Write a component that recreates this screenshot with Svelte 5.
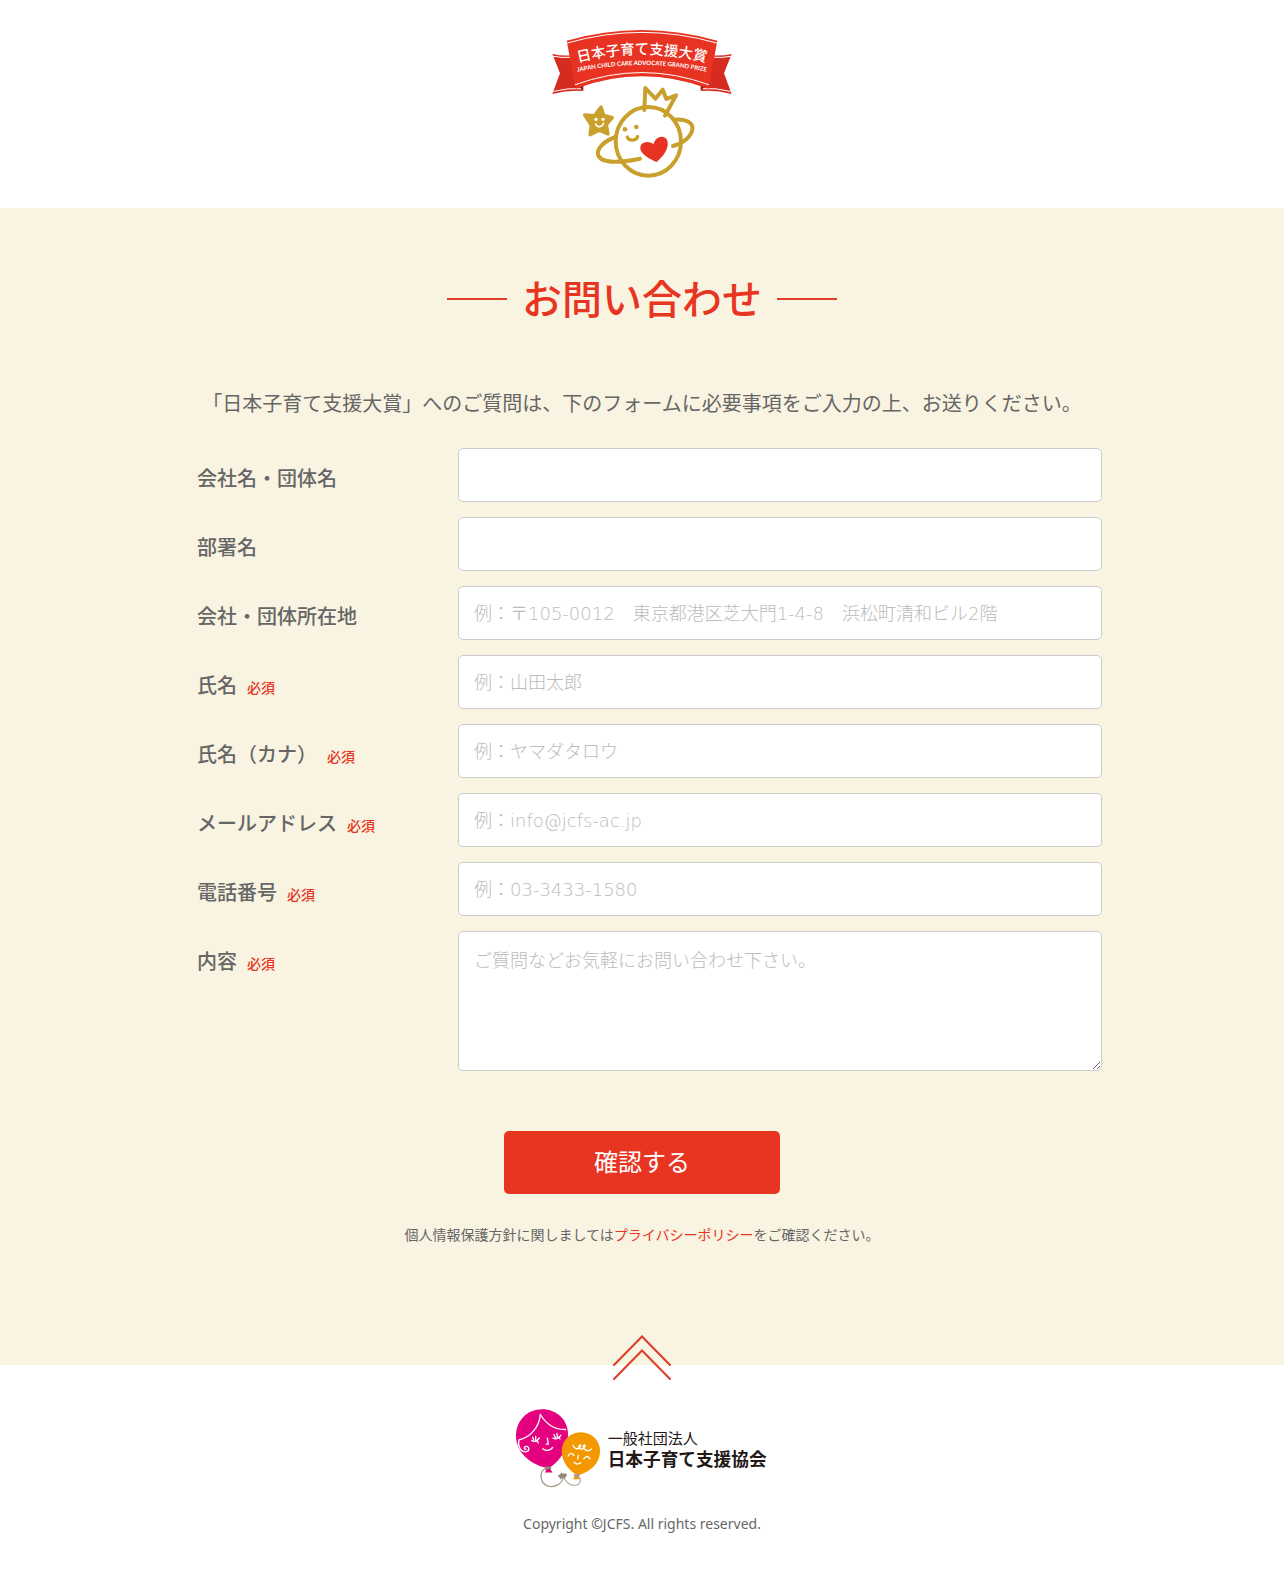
<script lang="ts">
  type Field = {
    id: string;
    label: string;
    type?: string;
    placeholder?: string;
    required?: boolean;
  };

  const fields: Field[] = [
    { id: 'company', label: '会社名・団体名' },
    { id: 'department', label: '部署名' },
    { id: 'address', label: '会社・団体所在地', placeholder: '例：〒105-0012　東京都港区芝大門1-4-8　浜松町清和ビル2階' },
    { id: 'name', label: '氏名', placeholder: '例：山田太郎', required: true },
    { id: 'kana', label: '氏名（カナ）', placeholder: '例：ヤマダタロウ', required: true },
    { id: 'email', label: 'メールアドレス', type: 'email', placeholder: '例：info@jcfs-ac.jp', required: true },
    { id: 'tel', label: '電話番号', type: 'tel', placeholder: '例：03-3433-1580', required: true }
  ];

  let values = $state<Record<string, string>>({});
  let message = $state('');

  function handleSubmit(e: SubmitEvent) {
    e.preventDefault();
  }
</script>

<div class="page" lang="ja">
  <header class="header">
    <a href="#top" class="header-logo" aria-label="日本子育て支援大賞">
      <svg viewBox="36 30 540 444" fill="none" stroke-linecap="round" stroke-linejoin="round">
        <!-- ribbon tails -->
        <path fill="#d62b1f" d="M37 102Q64 108 92 106L128 190V213Q84 210 37 222L60 160Z" />
        <path fill="#d62b1f" d="M575 102Q548 108 520 106L484 190V213Q528 210 575 222L552 160Z" />
        <path stroke="#fff" stroke-width="3" d="M40 109Q66 114 92 112M41 214Q84 203 126 206M572 109Q546 114 520 112M571 214Q528 203 486 206" />
        <path fill="#8c1710" d="M106 186L130 187V213Z" />
        <path fill="#8c1710" d="M506 186L482 187V213Z" />
        <!-- ribbon body -->
        <path fill="#e83323" d="M80 62Q306 -2 532 62L505 206Q306 132 107 206Z" />
        <path stroke="#fff" stroke-width="3" d="M82 69Q306 5 530 69M106 194Q306 121 506 194" />
        <path id="ribbon-ja" d="M102 130Q306 76 510 130" />
        <path id="ribbon-en" d="M100 158Q306 112 512 158" />
        <text class="ribbon-ja"><textPath href="#ribbon-ja" startOffset="50%">日本子育て支援大賞</textPath></text>
        <text class="ribbon-en"><textPath href="#ribbon-en" startOffset="50%">JAPAN CHILD CARE ADVOCATE GRAND PRIZE</textPath></text>
        <!-- planet with crown, star and heart -->
        <g stroke="#c9a02c" stroke-width="12">
          <ellipse cx="325" cy="364" rx="98" ry="103" />
          <path d="M313 270L316 204L346 236L368 209L379 237L408 226L375 287" />
          <path d="M402 299C436 296 461 306 457 329C453 350 430 370 399 378" />
          <path d="M226 351C196 362 169 384 174 404C182 432 242 428 300 416" />
          <path d="M262 351C266 364 290 363 293 349" stroke-width="10" />
        </g>
        <g fill="#c9a02c">
          <circle cx="255" cy="328" r="7" />
          <circle cx="289" cy="321" r="7" />
        </g>
        <path fill="#c9a02c" stroke="#c9a02c" stroke-width="10" d="M183 261L191 286L217 293L199 314L204 342L178 331L150 344L154 316L134 285L163 287Z" />
        <g fill="#fff">
          <circle cx="168" cy="298" r="5" />
          <circle cx="189" cy="298" r="5" />
        </g>
        <path stroke="#fff" stroke-width="5" d="M167 312C172 324 187 322 190 310" />
        <path fill="#e83323" d="M350 426C330 417 304 404 301 386C299 369 322 359 341 373C344 350 371 342 381 359C391 383 369 409 350 426Z" />
      </svg>
    </a>
  </header>

  <main class="main">
    <div class="container">
      <h1 class="title">お問い合わせ</h1>
      <p class="lead">「日本子育て支援大賞」へのご質問は、下のフォームに必要事項をご入力の上、お送りください。</p>

      <form onsubmit={handleSubmit}>
        {#each fields as field}
          <div class="row">
            <label for={field.id}>
              {field.label}{#if field.required}<span class="required">必須</span>{/if}
            </label>
            <input
              id={field.id}
              type={field.type ?? 'text'}
              placeholder={field.placeholder}
              required={field.required}
              bind:value={values[field.id]}
            />
          </div>
        {/each}
        <div class="row">
          <label for="message">内容<span class="required">必須</span></label>
          <textarea id="message" placeholder="ご質問などお気軽にお問い合わせ下さい。" required bind:value={message}></textarea>
        </div>

        <button type="submit" class="submit">確認する</button>
      </form>

      <p class="policy">個人情報保護方針に関しましては<a href="#privacy">プライバシーポリシー</a>をご確認ください。</p>
    </div>
  </main>

  <footer class="footer">
    <a href="#top" class="page-top" aria-label="ページの先頭へ">
      <svg viewBox="0 0 58 45" fill="none" stroke="#dc3c28" stroke-width="2" stroke-linecap="round">
        <path d="M1 30L29 1.500L57 30M1 44L29 15.500L57 44" />
      </svg>
    </a>
    <a href="#jcfs" class="footer-logo" aria-label="一般社団法人 日本子育て支援協会">
      <svg viewBox="48 266 756 236" fill="none" stroke-linecap="round" stroke-linejoin="round">
        <!-- strings -->
        <path stroke="#a89a8c" stroke-width="4" d="M136 444C118 454 118 486 142 496C166 504 188 488 190 468" />
        <path stroke="#c0b8ae" stroke-width="4" d="M190 468C196 486 214 498 230 494C244 488 244 474 236 470" />
        <path fill="#94867a" d="M173 464L180 462L184 456L190 460L198 458L201 465L194 474L186 472L182 477L178 471Z" />
        <!-- pink balloon -->
        <path fill="#e4007f" d="M126 266C171 266 204 298 204 342C204 390 174 428 145 443C105 438 48 404 48 345C48 300 82 266 126 266Z" />
        <path fill="#94867a" d="M134 438H154L152 449H137Z" />
        <path fill="#e4007f" d="M139 446H151L158 456H135Z" />
        <g stroke="#fff" stroke-width="4">
          <path d="M121 282C118 320 90 352 57 358C52 376 62 394 77 394C90 393 90 376 77 378C70 380 73 387 78 386" />
          <path d="M121 282C138 310 164 328 197 327" />
          <path d="M95 360Q107 368 118 352M98 350L101 358M107 348V358M115 367L111 361" />
          <path d="M159 353Q171 360 183 344M162 342L166 351M171 339L172 350M180 355L177 350" />
          <path d="M142 353L145 371H139M128 385C138 393 151 390 158 381" />
        </g>
        <!-- orange balloon -->
        <path fill="#f39800" d="M242 335C276 335 300 360 300 392C300 428 272 454 234 464C210 454 185 425 185 392C185 360 210 335 242 335Z" />
        <path fill="#a89a8c" d="M221 461H240L237 471H224Z" />
        <path fill="#f39800" d="M223 469H235L239 476H219Z" />
        <g stroke="#fff" stroke-width="4">
          <path d="M219 374C222 384 231 388 238 382C248 374 238 370 236 378C236 388 249 388 254 380C260 370 248 372 250 380C254 391 267 394 274 385" />
          <path d="M204 407Q211 391 222 405M251 415Q262 401 270 415M235 404L233 415M222 425C229 432 237 431 242 426" />
        </g>
        <text class="org-type" x="323" y="370">一般社団法人</text>
        <text class="org-name" x="323" y="436">日本子育て支援協会</text>
      </svg>
    </a>
    <small class="copyright">Copyright ©JCFS. All rights reserved.</small>
  </footer>
</div>

<style>
  :global(body) {
    margin: 0;
    background: #fff;
  }

  .page {
    color: #666;
    font-family: 'Noto Sans', 'Noto Sans CJK JP', sans-serif;
    font-size: 20px;
    line-height: 32px;
  }

  .header {
    display: flex;
    justify-content: center;
    padding: 30px 0;
  }

  .header-logo svg {
    display: block;
    width: 180px;
    height: 148px;
  }

  .ribbon-ja {
    fill: #fff;
    font-family: 'Noto Sans CJK JP', sans-serif;
    font-size: 43px;
    font-weight: 500;
    text-anchor: middle;
  }

  .ribbon-en {
    fill: #fff;
    font-family: Lato, sans-serif;
    font-size: 18px;
    font-weight: 700;
    text-anchor: middle;
  }

  .main {
    padding: 60px 20px 119px;
    background: #f9f3e1;
  }

  .container {
    max-width: 920px;
    margin: 0 auto;
  }

  .title {
    display: flex;
    justify-content: center;
    align-items: center;
    gap: 15px;
    margin: 0 0 58px;
    color: #e83522;
    font-size: 40px;
    font-weight: 500;
    line-height: 62px;
  }

  .title::before,
  .title::after {
    content: '';
    width: 60px;
    height: 2px;
    background: #e03c26;
  }

  .lead {
    margin: 0 0 28px;
    text-align: center;
  }

  .row {
    display: grid;
    grid-template-columns: 30% 70%;
    align-items: start;
    margin-bottom: 15px;
  }

  label {
    padding: 15px 15px 0;
    font-weight: 500;
  }

  .required {
    margin-left: 10px;
    color: #e83522;
    font-size: 14px;
  }

  input,
  textarea {
    box-sizing: border-box;
    display: block;
    width: 100%;
    height: 54px;
    margin: 0;
    padding: 0 15px;
    border: 1px solid #ccc;
    border-radius: 5px;
    background: #fff;
    color: #666;
    font-family: 'DejaVu Sans', 'Noto Sans CJK JP', sans-serif;
    font-size: 18px;
    font-weight: 300;
  }

  textarea {
    height: 140px;
    padding: 15px;
    line-height: 27px;
  }

  input::placeholder,
  textarea::placeholder {
    color: #bbb;
    opacity: 1;
  }

  .submit {
    display: block;
    width: 30%;
    height: 63px;
    margin: 60px auto 30px;
    padding: 0 0 4px;
    border: 0;
    border-radius: 5px;
    background: #e83522;
    color: #fff;
    font-family: inherit;
    font-size: 24px;
    cursor: pointer;
  }

  .policy {
    margin: 0;
    font-size: 14px;
    line-height: 22px;
    text-align: center;
  }

  .policy a {
    color: #e83522;
    text-decoration: none;
  }

  .footer {
    position: relative;
    display: flex;
    flex-direction: column;
    align-items: center;
    padding: 44px 20px 56px;
  }

  .page-top {
    position: absolute;
    top: -30px;
    left: 50%;
    transform: translateX(-50%);
  }

  .page-top svg {
    display: block;
    width: 58px;
    height: 45px;
  }

  .footer-logo svg {
    display: block;
    width: 252px;
    height: 79px;
  }

  .org-type,
  .org-name {
    fill: #231815;
    font-family: 'Noto Sans CJK JP', sans-serif;
    font-size: 45px;
  }

  .org-name {
    font-size: 53px;
    font-weight: 700;
  }

  .copyright {
    margin-top: 25px;
    font-size: 14px;
    line-height: 22px;
  }
</style>
